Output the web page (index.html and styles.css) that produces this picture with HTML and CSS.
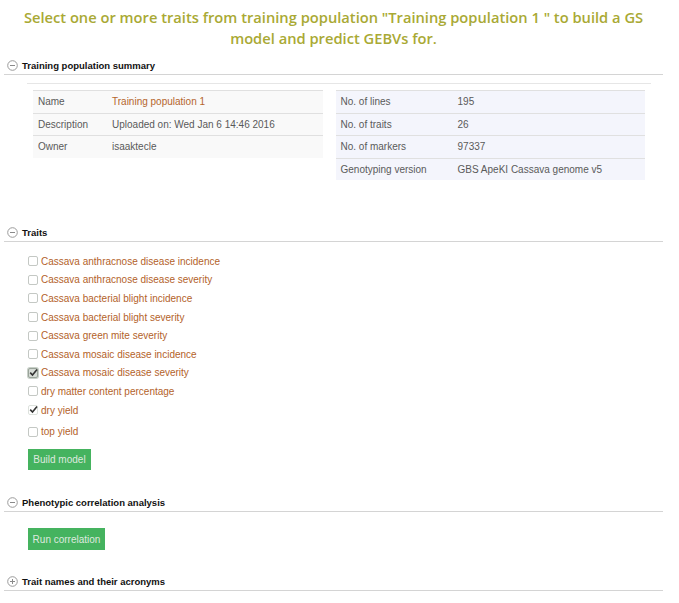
FILE: index.html
```html
<!DOCTYPE html>
<html>
<head>
<meta charset="utf-8">
<title>Training population</title>
<link rel="stylesheet" href="styles.css">
</head>
<body>
<div class="page">
  <h1 class="title">Select one or more traits from training population "Training population 1 " to build a GS model and predict GEBVs for.</h1>

  <div class="sec-head sec-summary">
    <svg class="toggle" width="11" height="11" viewBox="0 0 11 11"><circle cx="5.5" cy="5.5" r="4.8" fill="#fff" stroke="#9a9a9a" stroke-width="1"/><line x1="3" y1="5.5" x2="8" y2="5.5" stroke="#8a8a8a" stroke-width="1"/></svg>
    <span>Training population summary</span>
  </div>
  <div class="summary">
    <table class="info info-left">
      <tr><td class="lab">Name</td><td class="val link">Training population 1</td></tr>
      <tr><td class="lab">Description</td><td class="val">Uploaded on: Wed Jan 6 14:46 2016</td></tr>
      <tr><td class="lab">Owner</td><td class="val">isaaktecle</td></tr>
    </table>
    <table class="info info-right">
      <tr><td class="lab">No. of lines</td><td class="val">195</td></tr>
      <tr><td class="lab">No. of traits</td><td class="val">26</td></tr>
      <tr><td class="lab">No. of markers</td><td class="val">97337</td></tr>
      <tr><td class="lab">Genotyping version</td><td class="val">GBS ApeKI Cassava genome v5</td></tr>
    </table>
  </div>

  <div class="sec-head sec-traits">
    <svg class="toggle" width="11" height="11" viewBox="0 0 11 11"><circle cx="5.5" cy="5.5" r="4.8" fill="#fff" stroke="#9a9a9a" stroke-width="1"/><line x1="3" y1="5.5" x2="8" y2="5.5" stroke="#8a8a8a" stroke-width="1"/></svg>
    <span>Traits</span>
  </div>
  <ul class="traits">
    <li><span class="box"></span>Cassava anthracnose disease incidence</li>
    <li><span class="box"></span>Cassava anthracnose disease severity</li>
    <li><span class="box"></span>Cassava bacterial blight incidence</li>
    <li><span class="box"></span>Cassava bacterial blight severity</li>
    <li><span class="box"></span>Cassava green mite severity</li>
    <li><span class="box"></span>Cassava mosaic disease incidence</li>
    <li><span class="box checked focus"><svg width="9" height="9" viewBox="0 0 9 9"><path d="M1.2 4.6 L3.5 7 L8 1.6" fill="none" stroke="#333" stroke-width="1.6"/></svg></span>Cassava mosaic disease severity</li>
    <li><span class="box"></span>dry matter content percentage</li>
    <li><span class="box checked"><svg width="9" height="9" viewBox="0 0 9 9"><path d="M1.2 4.6 L3.5 7 L8 1.6" fill="none" stroke="#333" stroke-width="1.6"/></svg></span>dry yield</li>
    <li class="last"><span class="box"></span>top yield</li>
  </ul>
  <button class="btn btn-build">Build model</button>

  <div class="sec-head sec-pheno">
    <svg class="toggle" width="11" height="11" viewBox="0 0 11 11"><circle cx="5.5" cy="5.5" r="4.8" fill="#fff" stroke="#9a9a9a" stroke-width="1"/><line x1="3" y1="5.5" x2="8" y2="5.5" stroke="#8a8a8a" stroke-width="1"/></svg>
    <span>Phenotypic correlation analysis</span>
  </div>
  <button class="btn btn-corr">Run correlation</button>

  <div class="sec-head sec-acr">
    <svg class="toggle" width="11" height="11" viewBox="0 0 11 11"><circle cx="5.5" cy="5.5" r="4.8" fill="#fff" stroke="#9a9a9a" stroke-width="1"/><line x1="3" y1="5.5" x2="8" y2="5.5" stroke="#8a8a8a" stroke-width="1"/><line x1="5.5" y1="3" x2="5.5" y2="8" stroke="#8a8a8a" stroke-width="1"/></svg>
    <span>Trait names and their acronyms</span>
  </div>
</div>
</body>
</html>
```

FILE: styles.css
```css
html, body {
  margin: 0;
  padding: 0;
  background: #fff;
}
body {
  font-family: "Liberation Sans", Arial, sans-serif;
  font-size: 10px;
  color: #555;
}
.page {
  width: 659px;
  padding: 0 4px;
  overflow: hidden;
}
.title {
  margin: 0;
  padding: 7px 4px 0 4px;
  font-family: "Open Sans", "DejaVu Sans", sans-serif;
  font-weight: 600;
  font-size: 14.7px;
  line-height: 21px;
  color: #a9a934;
  text-align: center;
}
.sec-head {
  display: flex;
  align-items: center;
  height: 17px;
  padding-left: 3px;
  border-bottom: 1px solid #d4d4d4;
  font-weight: bold;
  font-size: 9.5px;
  color: #111;
}
.sec-summary {
  margin-top: 8px;
}
.toggle {
  margin-right: 4px;
  flex: none;
}
.summary {
  margin: 8px 12px 0 23px;
  border-top: 1px solid #e6e6e6;
  padding: 6px 6px 0 6px;
  display: flex;
  gap: 13px;
  align-items: flex-start;
}
.info {
  border-collapse: collapse;
  font-size: 10px;
  color: #5a5a5a;
}
.info td {
  height: 21.5px;
  padding: 0 5px;
  border-top: 1px solid #e0e0e0;
  vertical-align: middle;
  white-space: nowrap;
}
.info-left {
  width: 290px;
  background: #f9f9f9;
}
.info-left .lab {
  width: 64px;
}
.info-right {
  width: 310px;
  background: #f4f5fc;
}
.info-right .lab {
  width: 107px;
}
.link {
  color: #b5652c;
}
.sec-traits {
  margin-top: 44px;
}
.traits {
  list-style: none;
  margin: 10px 0 0 0;
  padding: 0 0 0 24px;
  color: #b3622a;
  font-size: 10px;
}
.traits li {
  display: flex;
  align-items: center;
  height: 18.6px;
}
.traits li.last {
  height: 21px;
  padding-top: 2px;
}
.box {
  position: relative;
  box-sizing: border-box;
  width: 10px;
  height: 10px;
  margin-right: 3px;
  border: 1px solid #c4c8c4;
  border-radius: 2px;
  background: #fff;
  flex: none;
}
.box svg {
  position: absolute;
  left: 0;
  top: -1px;
}
.box.checked {
  border-color: #dde2dd;
}
.box.focus {
  border-color: #9aa39a;
  background: #d6dcd6;
  box-shadow: 0 0 0 1px #c8d0c8;
}
.btn {
  display: block;
  border: none;
  background: #45b35f;
  color: #dfe9df;
  font-family: "Liberation Sans", Arial, sans-serif;
  font-size: 10px;
  padding: 0;
  cursor: pointer;
}
.btn-build {
  margin: 7px 0 0 24px;
  width: 63px;
  height: 21px;
}
.sec-pheno {
  margin-top: 24px;
}
.btn-corr {
  margin: 16px 0 0 24px;
  width: 77px;
  height: 22px;
}
.sec-acr {
  margin-top: 23px;
}
```
